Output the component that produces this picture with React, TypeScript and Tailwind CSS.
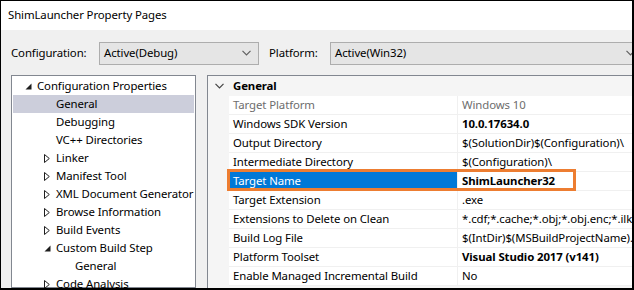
import React from 'react';

type TreeItem = { label: string; depth: number; arrow: 'open' | 'closed' | 'none'; selected?: boolean };

const tree: TreeItem[] = [
  { label: 'Configuration Properties', depth: 0, arrow: 'open' },
  { label: 'General', depth: 1, arrow: 'none', selected: true },
  { label: 'Debugging', depth: 1, arrow: 'none' },
  { label: 'VC++ Directories', depth: 1, arrow: 'none' },
  { label: 'Linker', depth: 1, arrow: 'closed' },
  { label: 'Manifest Tool', depth: 1, arrow: 'closed' },
  { label: 'XML Document Generator', depth: 1, arrow: 'closed' },
  { label: 'Browse Information', depth: 1, arrow: 'closed' },
  { label: 'Build Events', depth: 1, arrow: 'closed' },
  { label: 'Custom Build Step', depth: 1, arrow: 'open' },
  { label: 'General', depth: 2, arrow: 'none' },
  { label: 'Code Analysis', depth: 1, arrow: 'closed' },
];

type Prop = { name: string; value: string; bold?: boolean; dim?: boolean; selected?: boolean };

const props: Prop[] = [
  { name: 'Target Platform', value: 'Windows 10', dim: true },
  { name: 'Windows SDK Version', value: '10.0.17634.0', bold: true },
  { name: 'Output Directory', value: '$(SolutionDir)$(Configuration)\\' },
  { name: 'Intermediate Directory', value: '$(Configuration)\\' },
  { name: 'Target Name', value: 'ShimLauncher32', bold: true, selected: true },
  { name: 'Target Extension', value: '.exe' },
  { name: 'Extensions to Delete on Clean', value: '*.cdf;*.cache;*.obj;*.obj.enc;*.ilk;*.ipdb;*.iobj' },
  { name: 'Build Log File', value: '$(IntDir)$(MSBuildProjectName).log' },
  { name: 'Platform Toolset', value: 'Visual Studio 2017 (v141)', bold: true },
  { name: 'Enable Managed Incremental Build', value: 'No' },
];

function Chevron({ className }: { className?: string }) {
  return (
    <svg width="9" height="6" viewBox="0 0 9 6" className={className}>
      <polyline points="0.5,0.8 4.5,4.8 8.5,0.8" fill="none" stroke="currentColor" strokeWidth="1.2" />
    </svg>
  );
}

function TreeArrow({ kind }: { kind: TreeItem['arrow'] }) {
  if (kind === 'open') {
    return (
      <svg width="7" height="7" viewBox="0 0 7 7">
        <polygon points="6.5,0.5 6.5,6.5 0.5,6.5" fill="#1e1e1e" />
      </svg>
    );
  }
  if (kind === 'closed') {
    return (
      <svg width="6" height="9" viewBox="0 0 6 9">
        <polygon points="0.5,0.5 5.3,4.5 0.5,8.5" fill="none" stroke="#1e1e1e" strokeWidth="1" />
      </svg>
    );
  }
  return null;
}

function Dropdown({ value, className }: { value: string; className: string }) {
  return (
    <div className={`flex h-[23px] shrink-0 items-center justify-between border border-[#adadad] bg-[#e5e5e5] pl-[4px] pr-[7px] ${className}`}>
      <span>{value}</span>
      <Chevron className="text-[#606060]" />
    </div>
  );
}

export default function App() {
  return (
    <div className="flex h-[290px] w-[634px] flex-col overflow-hidden border-t border-l border-r-2 border-b-2 border-black bg-[#f0f0f0] font-['Segoe_UI','Noto_Sans',sans-serif] text-[11.4px] leading-none tracking-[-0.1px] text-black">
      <div className="flex h-[29px] shrink-0 items-center bg-white pl-[7px] pb-[2px]">ShimLauncher Property Pages</div>

      <div className="flex h-[45px] shrink-0 items-center pl-[10px] pt-[1px]">
        <span className="w-[88px] shrink-0">Configuration:</span>
        <Dropdown value="Active(Debug)" className="w-[160px]" />
        <span className="ml-[10px] w-[61px] shrink-0">Platform:</span>
        <Dropdown value="Active(Win32)" className="w-[313px]" />
      </div>

      <div className="flex min-h-0 flex-1">
        <div className="ml-[10px] w-[185px] shrink-0 border border-[#828790] bg-white p-px">
          {tree.map((t, i) => (
            <div
              key={i}
              className={`flex h-[18px] items-center ${t.selected ? 'bg-[#cccedb]' : ''}`}
              style={{ paddingLeft: 6 + t.depth * 19 }}
            >
              <span className="flex w-[18px] shrink-0 items-center justify-center">
                <TreeArrow kind={t.arrow} />
              </span>
              <span className="whitespace-nowrap">{t.label}</span>
            </div>
          ))}
        </div>

        <div className="relative ml-[11px] flex-1 overflow-hidden border-t border-l border-[#828790] bg-[#f5f5f5]">
          <div className="flex h-[20px] items-center">
            <span className="flex w-[21px] items-center justify-center pl-[1px]">
              <Chevron className="text-[#444]" />
            </span>
            <span className="pl-[4px] font-bold">General</span>
          </div>
          {props.map((p) => (
            <div key={p.name} className="ml-[21px] flex h-[19px] border-b border-[#f0f0f0] bg-white">
              <div
                className={`flex w-[229px] shrink-0 items-center border-r border-[#f0f0f0] pl-[4px] whitespace-nowrap ${
                  p.selected ? 'bg-[#0078d7] text-white' : p.dim ? 'text-[#6d6d6d]' : ''
                }`}
              >
                {p.name}
              </div>
              <div
                className={`flex items-center pl-[4px] whitespace-nowrap ${p.bold ? 'font-bold' : ''} ${
                  p.dim ? 'text-[#6d6d6d]' : ''
                }`}
              >
                {p.value}
              </div>
            </div>
          ))}
          <div className="pointer-events-none absolute left-[19px] top-[93px] h-[22px] w-[349px] border-[3px] border-[#ed7d31]" />
        </div>
      </div>
    </div>
  );
}
